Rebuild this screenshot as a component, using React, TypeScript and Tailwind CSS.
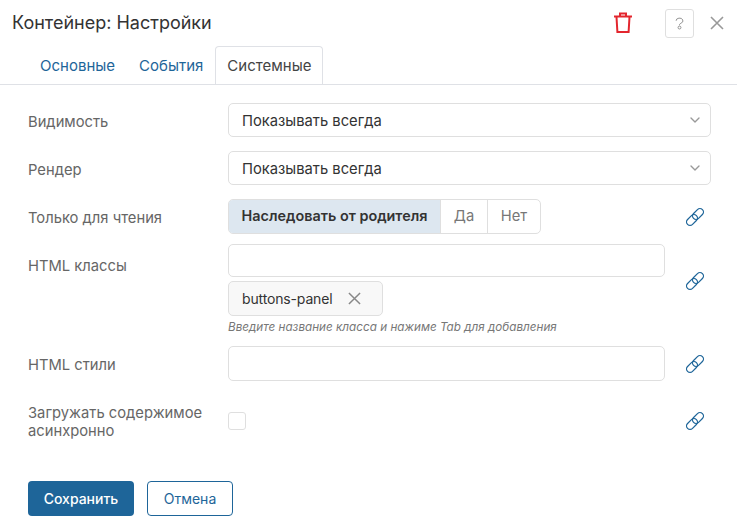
import React from "react";
import { ChevronDown } from "lucide-react";

function LinkIcon() {
    return (
        <svg viewBox="0 0 20 20" className="w-[20px] h-[20px] text-[#1e6599]" fill="none" stroke="currentColor" strokeWidth="1.25">
            <g transform="rotate(-45 10 10)">
                <rect x="-0.5" y="6.5" width="12.5" height="7" rx="3.5" />
                <rect x="8" y="6.5" width="12.5" height="7" rx="3.5" />
            </g>
        </svg>
    );
}

function CloseIcon({ className }: { className: string }) {
    return (
        <svg viewBox="0 0 14 14" className={className} fill="none" stroke="currentColor" strokeWidth="1.6">
            <path d="M1 1l12 12M13 1L1 13" />
        </svg>
    );
}

function SelectRow({ label }: { label: string }) {
    return (
        <div className="flex items-center h-[34px] mb-[14px]">
            <div className="w-[200px] shrink-0 text-[#666] text-[14.75px] pt-[5px]">{label}</div>
            <div className="w-[483px] shrink-0 h-[34px] border border-[#dfdfdf] rounded-[5px] flex items-center justify-between pl-[13px] pr-[7px] text-[14.75px] text-[#333] pt-[3px]">
                <span>Показывать всегда</span>
                <ChevronDown className="w-[16px] h-[16px] text-[#999] -mt-[3px]" />
            </div>
        </div>
    );
}

export default function App() {
    return (
        <div className="w-[737px] h-[523px] bg-white overflow-hidden font-['Inter',sans-serif]">
            {/* Header */}
            <div className="flex items-center h-[46px] pl-[12px] pr-[13px]">
                <div className="text-[18px] text-[#333] flex-1 pb-[2px]">Контейнер: Настройки</div>
                <svg viewBox="0 0 20 21" className="w-[20px] h-[21px] text-[#e3262e] mr-[32px] -mt-[2px]" fill="none" stroke="currentColor" strokeWidth="2">
                    <path d="M1 4.5h18M7 4V1.5h6V4M3.5 5l.9 15h11.2l.9-15" />
                </svg>
                <div className="w-[29px] h-[29px] border border-[#dfdfdf] rounded-[3px] flex items-center justify-center text-[11px] text-[#888] mr-[16px]">
                    <svg viewBox="0 0 10 14" className="w-[9px] h-[13px]" fill="none" stroke="currentColor" strokeWidth="1">
                        <path d="M1.2 4a3.8 3 0 1 1 5.4 2.7L5 8v1" />
                        <circle cx="5" cy="11.5" r="1.6" />
                    </svg>
                </div>
                <CloseIcon className="w-[14px] h-[14px] text-[#999]" />
            </div>

            {/* Tabs */}
            <div className="flex items-end h-[39px] pl-[28px] border-b border-[#dfe1e6] text-[15px]">
                <div className="px-[12px] h-[38px] leading-[40px] text-[#1e6599]">Основные</div>
                <div className="px-[12px] h-[38px] leading-[40px] text-[#1e6599]">События</div>
                <div className="px-[11px] h-[38px] leading-[38px] text-[#444] border border-b-0 border-[#dfe1e6] rounded-t-[4px] bg-white">Системные</div>
            </div>

            {/* Form */}
            <div className="pl-[28px] pr-[26px] pt-[18px]">
                <SelectRow label="Видимость" />
                <SelectRow label="Рендер" />

                <div className="flex items-center h-[35px] mb-[10px]">
                    <div className="w-[200px] shrink-0 text-[#666] text-[14.75px] pt-[3px]">Только для чтения</div>
                    <div className="flex h-[35px] border border-[#dfdfdf] rounded-[5px] text-[14.75px] overflow-hidden">
                        <div className="w-[211px] bg-[#dde7f0] flex items-center justify-center font-semibold text-[#333] text-[14.4px] pb-[1px]">Наследовать от родителя</div>
                        <div className="w-[47px] border-l border-[#dfdfdf] flex items-center justify-center text-[#777]">Да</div>
                        <div className="w-[53px] border-l border-[#dfdfdf] flex items-center justify-center text-[#777]">Нет</div>
                    </div>
                    <div className="ml-auto mr-[6px]"><LinkIcon /></div>
                </div>

                <div className="flex mb-[9px]">
                    <div className="w-[200px] shrink-0 text-[#666] text-[14.75px] pt-[11px]">HTML классы</div>
                    <div className="w-[437px] shrink-0">
                        <div className="h-[33px] border border-[#dfdfdf] rounded-[5px]" />
                        <div className="mt-[4px] w-[155px] h-[35px] border border-[#dfdfdf] rounded-[5px] bg-[#f8f8f8] flex items-center pl-[13px] text-[14px] text-[#333]">
                            <span className="tracking-[-0.15px]">buttons-panel</span>
                            <CloseIcon className="w-[13px] h-[13px] text-[#888] ml-[16px]" />
                        </div>
                        <div className="text-[11.7px] italic text-[#777] h-[20px] leading-[20px] mt-[1px]">Введите название класса и нажиме Tab для добавления</div>
                    </div>
                    <div className="ml-auto mr-[6px] pt-[27px]"><LinkIcon /></div>
                </div>

                <div className="flex items-center h-[35px] mb-[22px]">
                    <div className="w-[200px] shrink-0 text-[#666] text-[14.75px] pt-[3px]">HTML стили</div>
                    <div className="w-[437px] shrink-0 h-[35px] border border-[#dfdfdf] rounded-[5px]" />
                    <div className="ml-auto mr-[6px]"><LinkIcon /></div>
                </div>

                <div className="flex items-center h-[36px] mb-[42px]">
                    <div className="w-[200px] shrink-0 text-[#666] text-[14.75px] leading-[18px] pt-[2px]">Загружать содержимое асинхронно</div>
                    <div className="w-[18px] h-[18px] border border-[#dfdfdf] rounded-[3px]" />
                    <div className="ml-auto mr-[6px]"><LinkIcon /></div>
                </div>

                <div className="flex gap-[13px]">
                    <div className="w-[106px] h-[35px] rounded-[4px] bg-[#1e6599] text-white font-medium text-[14px] flex items-center justify-center">Сохранить</div>
                    <div className="w-[86px] h-[35px] rounded-[4px] border border-[#1e6599] text-[#1e6599] text-[14px] flex items-center justify-center">Отмена</div>
                </div>
            </div>
        </div>
    );
}
